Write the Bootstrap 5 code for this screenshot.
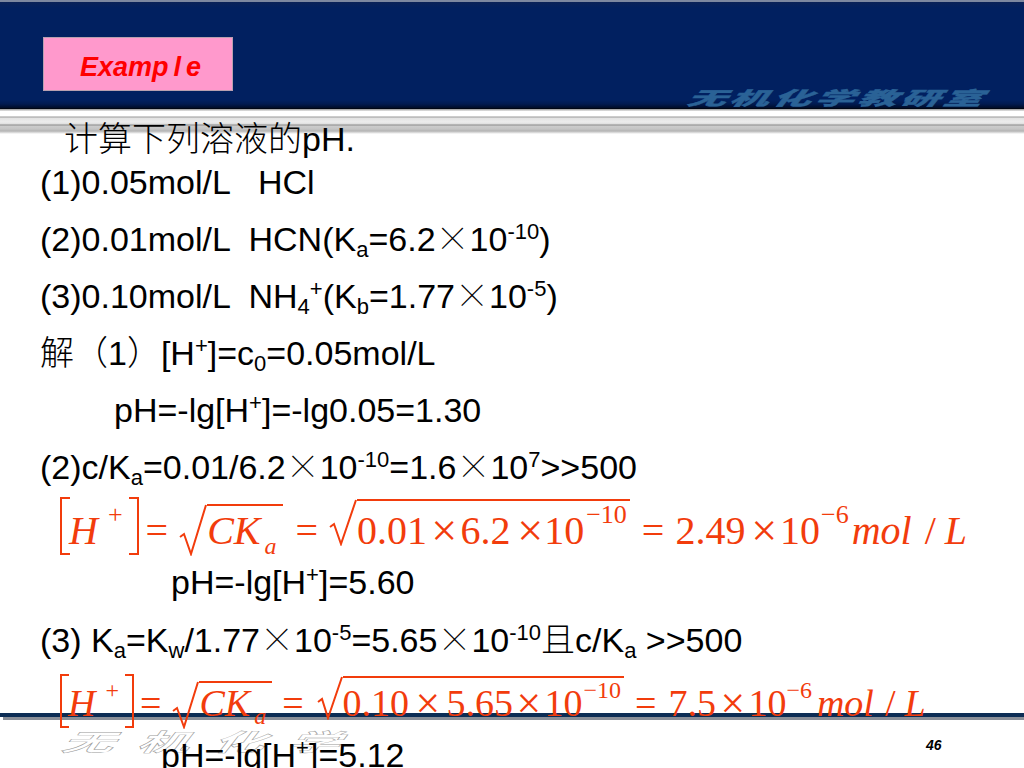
<!DOCTYPE html>
<html lang="zh-CN">
<head>
<meta charset="utf-8">
<title>Example</title>
<link href="https://cdn.jsdelivr.net/npm/bootstrap@5.3.0/dist/css/bootstrap.min.css" rel="stylesheet">
<style>
html,body{margin:0;background:#fff;}
.slide{position:relative;width:1024px;height:768px;overflow:hidden;background:#fff;color:#000;font-family:"Liberation Sans","Noto Sans CJK SC",sans-serif;font-size:34px;}
.topbar{height:109px;background:linear-gradient(#7d88a0 0,#7d88a0 1.5px,#0a2258 2px,#012060 8px,#012060 100px,#011a50 104px,#000c28 108px,#000 109px);}
.tag-box{margin-left:43px;margin-top:37px;width:190px;height:54px;background:#ff99cc;border:1px solid #b9a0b0;color:#f00;font-weight:bold;font-style:italic;font-size:27px;padding-left:36px;padding-top:6px;}
.tag-box i{margin:0 5px;}
.band{height:25px;background:linear-gradient(#aaa 0,#aaa 1px,#fff 2px,#fff 7px,#999 8px,#e2e2e2 9px,#ececec 13px,#dedede 15px,#8a8a8a 16px,#ccc 17px,#c4c4c4 20px,#b4b4b4 22px,#fff 25px);}
.wm-top{position:absolute;left:692px;top:81px;color:#2a6296;-webkit-text-stroke:.6px #2a6296;font-family:"Noto Sans CJK SC",sans-serif;font-weight:900;font-size:32px;line-height:32px;letter-spacing:3px;white-space:nowrap;transform-origin:0 50%;transform:skewX(-38deg) scale(1.22,.58);}
.wm-bot{position:absolute;left:68px;top:720px;color:#fff;-webkit-text-stroke:.6px #999;font-family:"Noto Sans CJK SC",sans-serif;font-weight:700;font-size:36px;line-height:40px;letter-spacing:16px;white-space:nowrap;transform-origin:0 50%;transform:skewX(-38deg) scale(1.45,.66);}
.rule{position:absolute;left:0;right:0;top:713px;height:4px;background:#0c2d55;box-shadow:3px 3px 0 #8a8f98;}
.pgno{position:absolute;left:926px;top:736px;font-size:14px;line-height:18px;font-weight:bold;font-style:italic;}
.main{position:relative;padding-left:40px;}
.first{margin-top:-12px;margin-left:24px;height:31.5px;line-height:35px;white-space:nowrap;}
.ln{height:57px;line-height:57px;white-space:pre;}
.ln.tall{height:58px;line-height:58px;}
.ln sub,.ln sup{font-size:22px;line-height:0;vertical-align:baseline;position:relative;}
.ln sup{top:-12px;}
.ln sub{top:6px;}
.cj{font-family:"Noto Sans CJK SC",sans-serif;font-weight:300;font-size:34px;line-height:0;}
.mul{font-family:"Noto Sans CJK SC",sans-serif;font-weight:100;font-size:34px;line-height:0;display:inline-block;width:34px;text-align:center;}
.ind1{padding-left:74px;}
.ind2{padding-left:131px;}
.ind3{padding-left:121px;}
.eq{margin-left:-40px;padding-left:60px;height:58px;color:#f23c0c;font-family:"Liberation Serif",serif;line-height:1;white-space:nowrap;align-items:baseline;}
.eq span,.eq svg{flex:none;}
.eq1{font-size:40px;padding-top:15.5px;}
.eq2{font-size:38px;padding-top:15px;}
.it{font-style:italic;}
.brk{display:block;align-self:flex-start;border:2px solid #f23c0c;}
.brk-l{border-right:0;}
.brk-r{border-left:0;}
.eq1 .brk{width:10px;height:58px;margin-top:-14px;}
.eq2 .brk{width:9px;height:54px;margin-top:-10px;}
.sqr{display:block;align-self:flex-start;fill:none;stroke:#f23c0c;stroke-width:2;}
.eq1 .s1{margin-top:-7px;}
.eq1 .s2{margin-top:-12px;}
.eq2 .s1{margin-top:-3px;}
.eq2 .s2{margin-top:-8px;}
.rad{position:relative;display:flex;align-items:baseline;}
.rad::before{content:"";position:absolute;left:0;right:0;height:2px;background:#f23c0c;}
.eq1 .r1::before{top:-7px;}
.eq1 .r2::before{top:-12px;}
.eq2 .r1::before{top:-3px;}
.eq2 .r2::before{top:-8px;}
.up{display:block;align-self:flex-start;}
.eq1 .up{font-size:26px;margin-top:-9px;}
.eq2 .up{font-size:24px;margin-top:-6px;}
.lo{display:block;align-self:flex-start;font-style:italic;font-size:24px;}
.eq1 .lo{margin-top:23px;}
.eq2 .lo{margin-top:20px;}
.tm{display:inline-block;transform:scale(1.15);}
.g-1{margin-left:-1px}.g1{margin-left:1px}.g2{margin-left:2px}.g3{margin-left:3px}.g4{margin-left:4px}.g5{margin-left:5px}.g6{margin-left:6px}.g7{margin-left:7px}.g8{margin-left:8px}.g9{margin-left:9px}.g10{margin-left:10px}.g11{margin-left:11px}.g12{margin-left:12px}.g13{margin-left:13px}
.pr3{padding-right:3px}.pr6{padding-right:6px}.pr7{padding-right:7px}
</style>
</head>
<body>
<div class="slide">
  <div class="topbar d-flex align-items-start">
    <div class="tag-box d-flex align-items-center">Examp<i>l</i>e</div>
  </div>
  <div class="band"></div>
  <div class="wm-top">无机化学教研室</div>
  <div class="rule"></div>
  <div class="wm-bot">无机化学</div>
  <div class="main">
    <div class="first"><span class="cj">计算下列溶液的</span>pH.</div>
    <div class="ln">(1)0.05mol/L   HCl</div>
    <div class="ln">(2)0.01mol/L  HCN(K<sub>a</sub>=6.2<span class="mul">×</span>10<sup>-10</sup>)</div>
    <div class="ln">(3)0.10mol/L  NH<sub>4</sub><sup>+</sup>(K<sub>b</sub>=1.77<span class="mul">×</span>10<sup>-5</sup>)</div>
    <div class="ln"><span class="cj">解（</span>1<span class="cj">）</span>[H<sup>+</sup>]=c<sub>0</sub>=0.05mol/L</div>
    <div class="ln ind1">pH=-lg[H<sup>+</sup>]=-lg0.05=1.30</div>
    <div class="ln">(2)c/K<sub>a</sub>=0.01/6.2<span class="mul">×</span>10<sup>-10</sup>=1.6<span class="mul">×</span>10<sup>7</sup>&gt;&gt;500</div>
    <div class="eq eq1 d-flex">
      <span class="brk brk-l"></span>
      <span class="it g-1">H</span><span class="up g10">+</span><span class="brk brk-r g6"></span>
      <span class="g7">=</span>
      <svg class="sqr s1 g11" width="28" height="52" viewBox="0 0 28 52"><path d="M1 33 L5 30 L12 50 L27 1"/></svg>
      <span class="rad r1 pr7"><span class="it">CK</span><span class="lo g4">a</span></span>
      <span class="g12">=</span>
      <svg class="sqr s2 g11" width="28" height="47" viewBox="0 0 28 47"><path d="M1 28 L5 25 L12 45 L27 1"/></svg>
      <span class="rad r2 pr3"><span>0.01</span><span class="tm g6">×</span><span class="g5">6.2</span><span class="tm g8">×</span><span class="g3">10</span><span class="up g2">−10</span></span>
      <span class="g12">=</span><span class="g11">2.49</span><span class="tm g8">×</span><span class="g4">10</span><span class="up g1">−6</span><span class="it g3">mol</span><span class="g13">/</span><span class="it g9">L</span>
    </div>
    <div class="ln ind2">pH=-lg[H<sup>+</sup>]=5.60</div>
    <div class="ln tall">(3) K<sub>a</sub>=K<sub>w</sub>/1.77<span class="mul">×</span>10<sup>-5</sup>=5.65<span class="mul">×</span>10<sup>-10</sup><span class="cj">且</span>c/K<sub>a</sub> &gt;&gt;500</div>
    <div class="eq eq2 d-flex">
      <span class="brk brk-l"></span>
      <span class="it g-1">H</span><span class="up g10">+</span><span class="brk brk-r g6"></span>
      <span class="g6">=</span>
      <svg class="sqr s1 g11" width="27" height="48" viewBox="0 0 27 48"><path d="M1 30 L5 27 L12 46 L26 1"/></svg>
      <span class="rad r1 pr6"><span class="it">CK</span><span class="lo g4">a</span></span>
      <span class="g10">=</span>
      <svg class="sqr s2 g13" width="26" height="44" viewBox="0 0 26 44"><path d="M1 26 L5 23 L11 42 L25 1"/></svg>
      <span class="rad r2 pr3"><span>0.10</span><span class="tm g8">×</span><span class="g8">5.65</span><span class="tm g5">×</span><span class="g5">10</span><span class="up g1">−10</span></span>
      <span class="g11">=</span><span class="g12">7.5</span><span class="tm g6">×</span><span class="g5">10</span><span class="up">−6</span><span class="it g5">mol</span><span class="g11">/</span><span class="it g9">L</span>
    </div>
    <div class="ln ind3">pH=-lg[H<sup>+</sup>]=5.12</div>
  </div>
  <div class="pgno">46</div>
</div>
<script src="https://cdn.jsdelivr.net/npm/bootstrap@5.3.0/dist/js/bootstrap.bundle.min.js"></script>
</body>
</html>
